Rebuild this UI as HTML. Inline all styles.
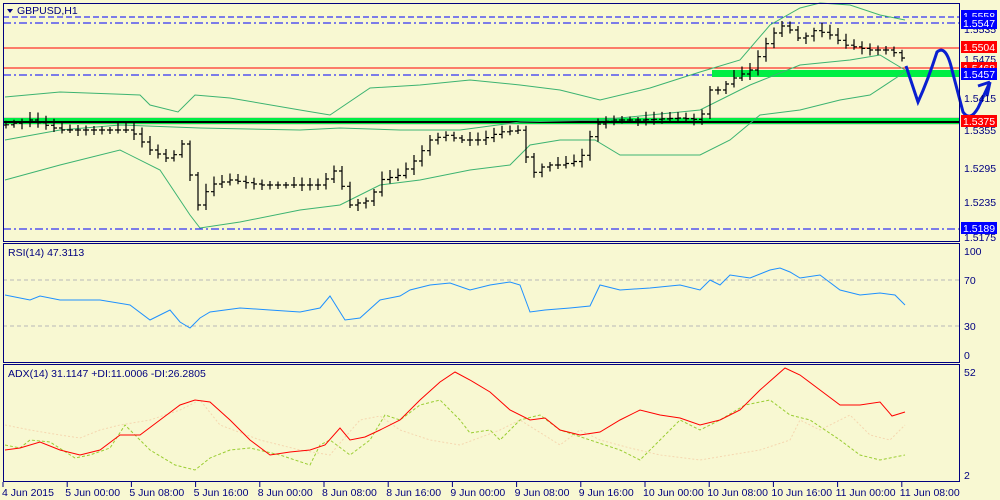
<!DOCTYPE html>
<html><head><meta charset="utf-8"><style>
body{margin:0;background:#f8f8d2;width:1000px;height:500px;overflow:hidden}
svg{display:block}
text{font-family:"Liberation Sans",sans-serif;font-size:10.5px}
</style></head><body>
<svg id="s" width="1000" height="500" viewBox="0 0 1000 500">
<rect width="1000" height="500" fill="#f8f8d2"/>
<!-- horizontal levels -->
<line x1="3" y1="17" x2="960" y2="17" stroke="#0000ff" stroke-dasharray="6,3"/>
<line x1="3" y1="23" x2="960" y2="23" stroke="#0000ff" stroke-dasharray="8,3,2,3"/>
<line x1="3" y1="48" x2="960" y2="48" stroke="#ff0000"/>
<line x1="3" y1="68" x2="960" y2="68" stroke="#ff0000"/>
<line x1="3" y1="75" x2="960" y2="75" stroke="#0000ff" stroke-dasharray="8,3,2,3"/>
<rect x="712" y="70" width="248" height="7" fill="#00ee44"/>
<rect x="3" y="117" width="957" height="8" fill="#b8b8a0" opacity="0.5"/>
<rect x="3" y="118" width="957" height="6" fill="#00ee44"/>
<line x1="3" y1="122" x2="960" y2="122" stroke="#000" stroke-width="2"/>
<line x1="3" y1="229" x2="960" y2="229" stroke="#0000ff" stroke-dasharray="8,3,2,3"/>
<g id="bb" fill="none" stroke="#3cb371" stroke-width="1"></g>
<g id="bars" stroke="#000" stroke-width="1.2"></g>
<!-- hand-drawn blue curve -->
<path d="M906 66 L918 102 Q928 80 937 52 Q946 44 952 70 L963 112 Q970 122 978 108 L990 82" fill="none" stroke="#0a1fd0" stroke-width="3"/>
<path d="M990 82 L978 86 M990 82 L987 96" stroke="#0a1fd0" stroke-width="3"/>
<!-- RSI -->
<line x1="3" y1="280" x2="960" y2="280" stroke="#b8b8b8" stroke-dasharray="4,3"/>
<line x1="3" y1="326" x2="960" y2="326" stroke="#b8b8b8" stroke-dasharray="4,3"/>
<polyline id="rsi" fill="none" stroke="#1e90ff"/>
<!-- ADX -->
<polyline id="pdi" fill="none" stroke="#f5d7b0" stroke-dasharray="2,2"/>
<polyline id="mdi" fill="none" stroke="#9acd32" stroke-dasharray="3,2"/>
<polyline id="adx" fill="none" stroke="#ff0000"/>
<!-- panel borders -->
<rect x="3.5" y="3.5" width="956" height="238" fill="none" stroke="#000080"/>
<rect x="3.5" y="243.5" width="956" height="119" fill="none" stroke="#000080"/>
<rect x="3.5" y="364.5" width="956" height="117" fill="none" stroke="#000080"/>
<path d="M7 9 L13 9 L10 13Z" fill="#000080"/>
<text x="17" y="14" fill="#000080">GBPUSD,H1</text>
<text x="8" y="256" fill="#000080">RSI(14) 47.3113</text>
<text x="8" y="377" fill="#000080">ADX(14) 31.1147 +DI:11.0006 -DI:26.2805</text>
<g fill="#000080">
<text x="964" y="33">1.5535</text><text x="964" y="63">1.5475</text><text x="964" y="102">1.5415</text>
<text x="964" y="134">1.5355</text><text x="964" y="172">1.5295</text><text x="964" y="206">1.5235</text>
<text x="964" y="241">1.5175</text>
<text x="964" y="255">100</text><text x="964" y="284">70</text><text x="964" y="330">30</text><text x="964" y="359">0</text>
<text x="964" y="376">52</text><text x="964" y="479">2</text>
</g>
<g font-size="11">
<rect x="961" y="10" width="36" height="12" fill="#0000ff"/><text x="963" y="20" fill="#fff">1.5558</text>
<rect x="961" y="17" width="36" height="12" fill="#0000ff"/><text x="963" y="27" fill="#fff">1.5547</text>
<rect x="961" y="41" width="36" height="12" fill="#ff0000"/><text x="963" y="51" fill="#fff">1.5504</text>
<rect x="961" y="62" width="36" height="12" fill="#ff0000"/><text x="963" y="72" fill="#fff">1.5468</text>
<rect x="961" y="68" width="36" height="12" fill="#0000ff"/><text x="963" y="78" fill="#fff">1.5457</text>
<rect x="961" y="115" width="36" height="12" fill="#ff0000"/><text x="963" y="125" fill="#fff">1.5375</text>
<rect x="961" y="222" width="36" height="12" fill="#0000ff"/><text x="963" y="232" fill="#fff">1.5189</text>
</g>
<g id="ticks" stroke="#000080"></g>
<g id="tl" fill="#000080"></g>
</svg>
<script>
var NS="http://www.w3.org/2000/svg";
function interp(pts,x){for(var i=0;i<pts.length-1;i++){if(x>=pts[i][0]&&x<=pts[i+1][0]){var t=(x-pts[i][0])/(pts[i+1][0]-pts[i][0]);return pts[i][1]+t*(pts[i+1][1]-pts[i][1]);}}return pts[pts.length-1][1];}
function pl(p){return p.map(function(a){return a.join(",")}).join(" ");}
function smooth(pts){var o=[];for(var x=pts[0][0];x<=pts[pts.length-1][0];x+=4)o.push([x,interp(pts,x).toFixed(1)]);return o;}
var up=[[5,97],[60,92],[140,95],[150,105],[178,112],[195,95],[230,98],[300,110],[330,115],[370,88],[420,85],[470,80],[520,85],[560,90],[600,100],[650,88],[700,72],[740,60],[770,25],[800,8],[820,3],[850,5],[880,15],[905,20]];
var mid=[[5,140],[60,130],[120,125],[200,128],[300,130],[340,128],[400,130],[460,130],[520,122],[600,120],[650,115],[700,110],[750,85],[800,65],[850,60],[880,55],[905,70]];
var lo=[[5,180],[60,165],[120,150],[160,170],[190,215],[200,228],[240,222],[300,210],[340,205],[380,185],[420,180],[470,170],[510,165],[530,145],[560,140],[595,140],[620,155],[700,155],[730,140],[760,115],[800,110],[840,100],[870,95],[905,72]];
var bb=document.getElementById("bb");
[up,mid,lo].forEach(function(p){var e=document.createElementNS(NS,"polyline");e.setAttribute("points",pl(p));bb.appendChild(e);});
var cl=[[5,125],[30,120],[60,130],[100,130],[130,130],[150,150],[170,160],[185,140],[195,210],[210,185],[230,180],[260,185],[290,185],[320,185],[335,170],[350,205],[370,200],[380,180],[400,175],[415,160],[430,140],[445,135],[460,140],[480,140],[500,132],[520,130],[530,175],[545,165],[560,165],[580,160],[595,125],[610,120],[640,120],[680,118],[700,120],[710,90],[720,90],[730,80],[750,70],[765,45],[780,25],[790,30],[800,40],[815,30],[830,35],[845,45],[870,50],[890,50],[905,60]];
var b=document.getElementById("bars"),s="";
var prev=interp(cl,5);
for(var x=6;x<=906;x+=8){var c=interp(cl,x);var n=((x*37)%11)/2;var hi=Math.min(prev,c)-3-n,lw=Math.max(prev,c)+3+((x*13)%7)/2;
s+="M"+x+" "+hi.toFixed(1)+"V"+lw.toFixed(1)+"M"+(x-3)+" "+prev.toFixed(1)+"H"+x+"M"+x+" "+c.toFixed(1)+"H"+(x+3);prev=c;}
var pe=document.createElementNS(NS,"path");pe.setAttribute("d",s);pe.setAttribute("fill","none");b.appendChild(pe);
var rsi=[[5,295],[30,300],[40,296],[60,300],[100,300],[130,305],[150,320],[160,315],[170,310],[180,322],[190,328],[200,318],[210,312],[240,308],[270,310],[300,312],[320,308],[330,296],[345,320],[360,318],[380,300],[400,296],[410,290],[430,285],[450,283],[470,290],[490,285],[510,282],[520,285],[530,312],[545,310],[570,308],[590,306],[600,285],[620,290],[650,288],[680,285],[700,290],[710,280],[720,285],[730,275],[750,278],[770,270],[780,268],[790,272],[800,278],[820,275],[840,290],[860,295],[880,293],[895,295],[905,305]];
document.getElementById("rsi").setAttribute("points",pl(rsi));
var adx=[[5,450],[20,448],[40,442],[60,450],[80,455],[100,450],[120,435],[140,435],[160,420],[180,405],[195,400],[210,402],[230,420],[250,440],[270,455],[290,452],[310,450],[325,445],[340,428],[350,440],[365,437],[380,430],[400,420],[420,400],[440,382],[455,372],[470,380],[490,392],[510,410],[530,420],[545,418],[560,430],[580,435],[600,432],[620,420],[640,410],[660,415],[680,418],[700,425],[720,420],[740,410],[760,390],[785,368],[800,375],[820,390],[840,405],[860,405],[880,402],[892,416],[905,412]];
var pdi=[[5,425],[30,430],[60,435],[80,438],[100,430],[120,425],[150,420],[180,410],[200,400],[220,425],[260,440],[300,450],[330,455],[340,443],[360,420],[380,416],[400,430],[430,440],[460,445],[500,430],[520,420],[560,445],[580,430],[600,440],[630,448],[660,455],[700,460],[730,455],[760,450],[790,440],[800,420],[820,430],[850,415],[870,435],[890,440],[905,425]];
var mdi=[[5,445],[20,448],[30,440],[50,442],[75,458],[90,455],[110,448],[125,425],[150,450],[175,465],[195,470],[210,458],[230,450],[250,448],[280,455],[310,465],[320,445],[330,440],[350,455],[370,440],[385,415],[400,420],[420,405],[440,400],[460,420],[470,433],[490,430],[500,440],[520,420],[540,415],[560,430],[590,440],[620,450],[640,460],[660,440],[680,420],[700,430],[720,420],[745,405],[770,400],[790,415],[810,420],[840,440],[860,455],[880,460],[905,455]];
document.getElementById("adx").setAttribute("points",pl(adx));
document.getElementById("pdi").setAttribute("points",pl(pdi));
document.getElementById("mdi").setAttribute("points",pl(mdi));
var labs=["4 Jun 2015","5 Jun 00:00","5 Jun 08:00","5 Jun 16:00","8 Jun 00:00","8 Jun 08:00","8 Jun 16:00","9 Jun 00:00","9 Jun 08:00","9 Jun 16:00","10 Jun 00:00","10 Jun 08:00","10 Jun 16:00","11 Jun 00:00","11 Jun 08:00"];
var tl=document.getElementById("tl"),tk=document.getElementById("ticks"),d="";
labs.forEach(function(l,i){var x=i==0?3:3+i*64.2;d+="M"+x.toFixed(1)+" 482V487";var t=document.createElementNS(NS,"text");t.setAttribute("x",i==0?2:x-2);t.setAttribute("y",496);t.textContent=l;tl.appendChild(t);});
var tp=document.createElementNS(NS,"path");tp.setAttribute("d",d);tk.appendChild(tp);
</script>
</body></html>
